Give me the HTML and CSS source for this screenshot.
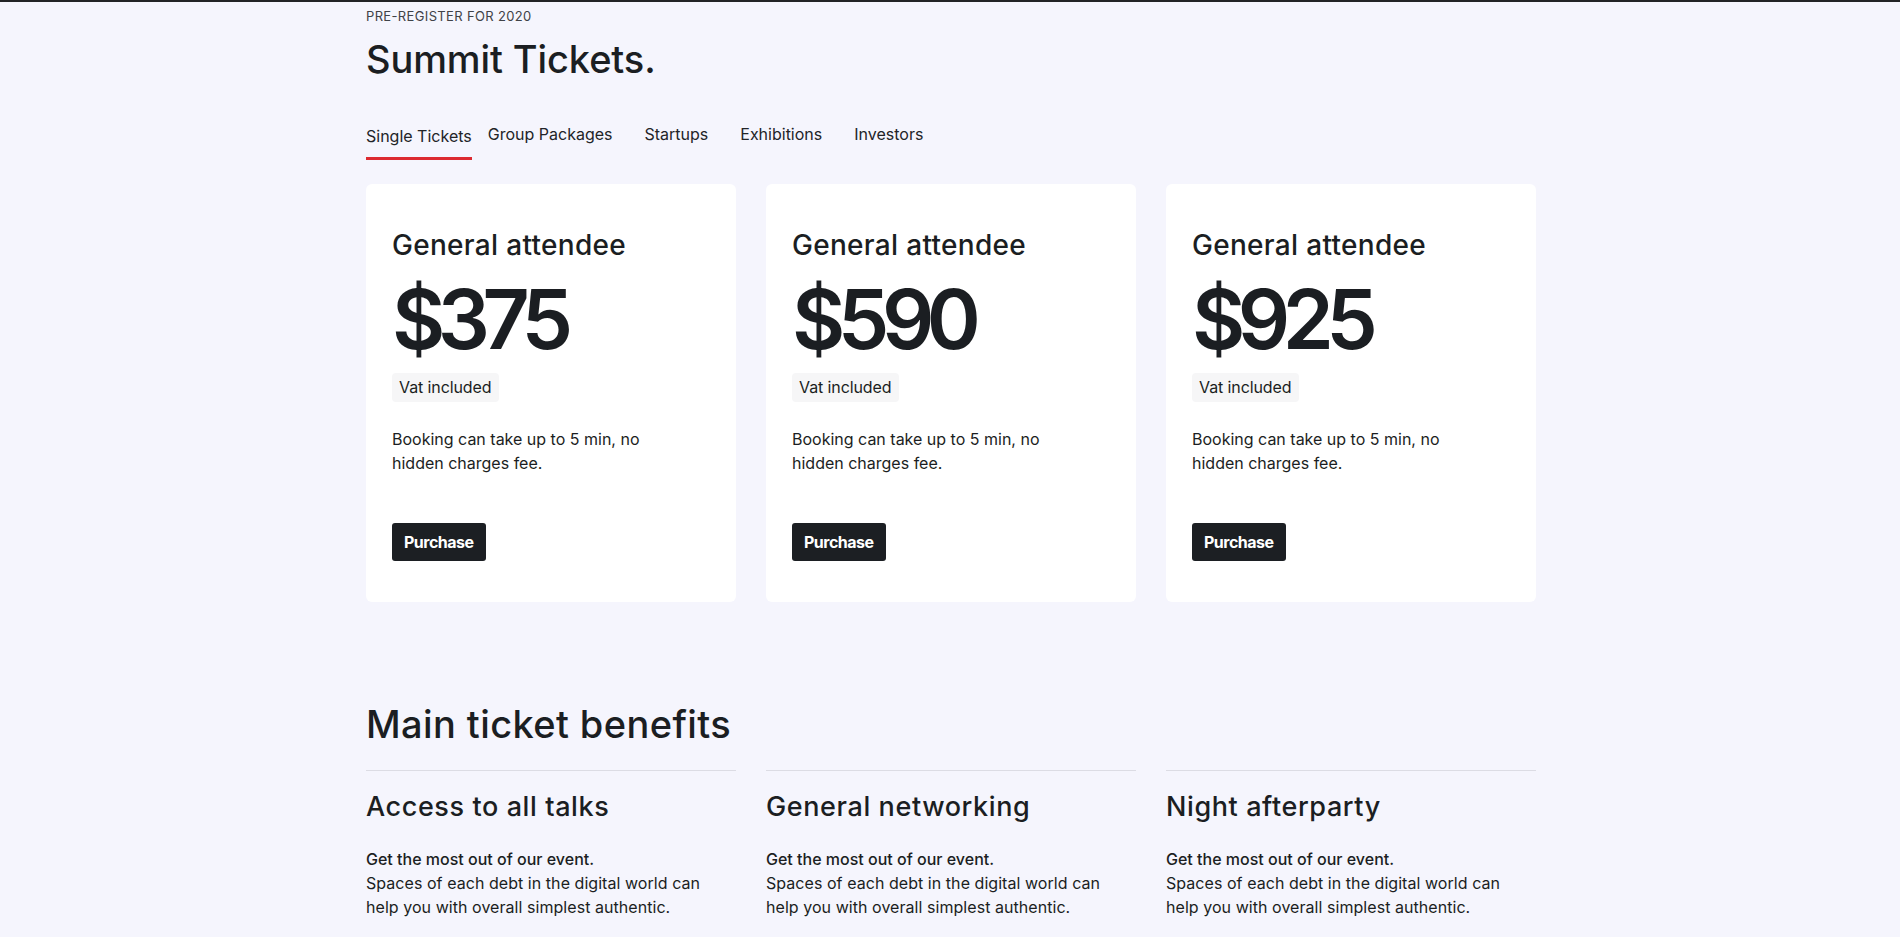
FILE: index.html
```html
<!DOCTYPE html>
<html lang="en">
<head>
<meta charset="utf-8">
<title>Summit Tickets</title>
<link rel="stylesheet" href="styles.css">
</head>
<body>
<div class="container">
  <header class="page-head">
    <p class="eyebrow">PRE-REGISTER FOR 2020</p>
    <h1 class="page-title">Summit Tickets.</h1>
  </header>

  <nav class="tabs">
    <a class="tab tab-active" href="#">Single Tickets</a>
    <a class="tab" href="#">Group Packages</a>
    <a class="tab" href="#">Startups</a>
    <a class="tab" href="#">Exhibitions</a>
    <a class="tab" href="#">Investors</a>
  </nav>

  <section class="cards">
    <article class="card">
      <h3 class="card-title">General attendee</h3>
      <div class="price">$375</div>
      <span class="badge">Vat included</span>
      <p class="card-text">Booking can take up to 5 min, no hidden charges fee.</p>
      <button class="btn">Purchase</button>
    </article>
    <article class="card">
      <h3 class="card-title">General attendee</h3>
      <div class="price">$590</div>
      <span class="badge">Vat included</span>
      <p class="card-text">Booking can take up to 5 min, no hidden charges fee.</p>
      <button class="btn">Purchase</button>
    </article>
    <article class="card">
      <h3 class="card-title">General attendee</h3>
      <div class="price">$925</div>
      <span class="badge">Vat included</span>
      <p class="card-text">Booking can take up to 5 min, no hidden charges fee.</p>
      <button class="btn">Purchase</button>
    </article>
  </section>

  <section class="benefits">
    <h2 class="benefits-title">Main ticket benefits</h2>
    <div class="benefit-grid">
      <div class="benefit">
        <h4 class="benefit-title">Access to all talks</h4>
        <p class="benefit-lead">Get the most out of our event.</p>
        <p class="benefit-text">Spaces of each debt in the digital world can help you with overall simplest authentic.</p>
      </div>
      <div class="benefit">
        <h4 class="benefit-title">General networking</h4>
        <p class="benefit-lead">Get the most out of our event.</p>
        <p class="benefit-text">Spaces of each debt in the digital world can help you with overall simplest authentic.</p>
      </div>
      <div class="benefit">
        <h4 class="benefit-title">Night afterparty</h4>
        <p class="benefit-lead">Get the most out of our event.</p>
        <p class="benefit-text">Spaces of each debt in the digital world can help you with overall simplest authentic.</p>
      </div>
    </div>
  </section>
</div>
</body>
</html>
```

FILE: styles.css
```css
* { box-sizing: border-box; }

html, body { margin: 0; padding: 0; }

body {
  background: #f5f5fd;
  border-top: 2px solid #222326;
  font-family: Inter, "Liberation Sans", sans-serif;
  color: #1b1e22;
  overflow: hidden;
}

.container {
  width: 1172px;
  padding-left: 2px;
  margin: 0 auto;
}

.page-head { padding-top: 6px; }

.eyebrow {
  margin: 0;
  font-size: 13px;
  line-height: 16px;
  color: #3f4247;
  letter-spacing: 0.35px;
}

.page-title {
  margin: 12px 0 0;
  font-size: 38px;
  line-height: 46px;
  font-weight: 500;
  letter-spacing: -0.1px;
}

.tabs {
  display: flex;
  align-items: flex-start;
  margin-top: 40px;
}

.tab {
  font-size: 16px;
  line-height: 24px;
  color: #222428;
  text-decoration: none;
  padding: 0 16px;
  letter-spacing: 0;
}

.tab-active {
  padding: 2px 0 9px;
  border-bottom: 3px solid #dc2a30;
}

.cards {
  display: grid;
  grid-template-columns: repeat(3, 1fr);
  gap: 30px;
  margin-top: 24px;
}

.card {
  background: #ffffff;
  border-radius: 6px;
  padding: 44px 26px 41px;
  display: flex;
  flex-direction: column;
  align-items: flex-start;
}

.card-title {
  margin: 0;
  font-size: 28px;
  line-height: 34px;
  font-weight: 500;
  letter-spacing: 0.3px;
}

.price {
  margin-top: 17px;
  font-size: 82px;
  line-height: 82px;
  font-weight: 600;
  letter-spacing: -7.5px;
}

.badge {
  margin-top: 12px;
  background: #f6f6f7;
  border-radius: 4px;
  padding: 4px 8px 4px 7px;
  font-size: 16px;
  line-height: 21px;
  letter-spacing: -0.1px;
}

.card-text {
  margin: 25px 0 0;
  max-width: 275px;
  font-size: 16px;
  line-height: 24px;
  letter-spacing: 0;
}

.btn {
  margin-top: 48px;
  height: 38px;
  padding: 0 12px;
  background: #1c1f23;
  color: #ffffff;
  border: 0;
  border-radius: 3px;
  font-family: Inter, "Liberation Sans", sans-serif;
  font-size: 16px;
  font-weight: 700;
  letter-spacing: -0.5px;
}

.benefits { margin-top: 99px; }

.benefits-title {
  margin: 0;
  font-size: 38px;
  line-height: 46px;
  font-weight: 500;
  letter-spacing: 0.4px;
}

.benefit-grid {
  display: grid;
  grid-template-columns: repeat(3, 1fr);
  gap: 30px;
  margin-top: 23px;
}

.benefit {
  border-top: 1px solid #dcdce4;
  padding-top: 20px;
}

.benefit-title {
  margin: 0;
  font-size: 27px;
  line-height: 32px;
  font-weight: 500;
  letter-spacing: 0.6px;
}

.benefit-lead {
  margin: 24px 0 0;
  font-size: 16px;
  line-height: 24px;
  font-weight: 500;
  letter-spacing: 0;
}

.benefit-text {
  margin: 0;
  max-width: 345px;
  font-size: 16px;
  line-height: 24px;
  letter-spacing: 0.05px;
}
```
